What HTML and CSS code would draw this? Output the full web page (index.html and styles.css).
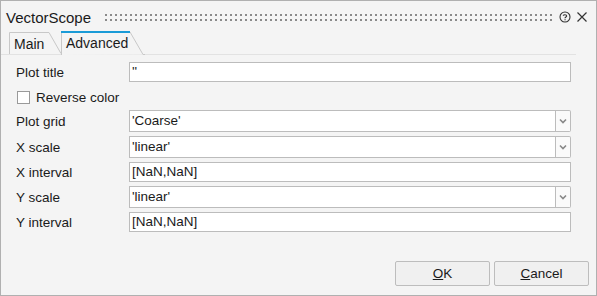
FILE: index.html
```html
<!DOCTYPE html>
<html>
<head>
<meta charset="utf-8">
<link rel="stylesheet" href="styles.css">
</head>
<body>
<div class="window">
  <div class="titlebar">
    <span class="title">VectorScope</span>
    <span class="grip"></span>
    <svg class="help" width="12" height="12" viewBox="0 0 12 12"><circle cx="6" cy="6" r="5" fill="none" stroke="#333" stroke-width="1.1"/><path d="M4.3 4.8 C4.3 3.4 7.7 3.4 7.7 4.9 C7.7 6 6 6 6 7.2" fill="none" stroke="#333" stroke-width="1.1"/><rect x="5.5" y="8.2" width="1.1" height="1.1" fill="#333"/></svg>
    <svg class="close" width="12" height="12" viewBox="0 0 12 12"><path d="M1.5 1.5 L10.5 10.5 M10.5 1.5 L1.5 10.5" stroke="#333" stroke-width="1.2"/></svg>
  </div>
  <div class="tabs">
    <div class="tab">
      <svg class="tabshape" width="56" height="22" viewBox="0 0 56 22" preserveAspectRatio="none"><path d="M0.5 22 V0.5 H40 L52 21.5 H56" fill="none" stroke="#c8c8c8"/></svg>
      <span>Main</span>
    </div>
    <div class="tab active">
      <svg class="tabshape" width="84" height="24" viewBox="0 0 84 24" preserveAspectRatio="none"><path d="M0.5 24 V1 H69 L82 23.5 H84" fill="#f4f4f4" stroke="#c8c8c8"/><rect x="0" y="0" width="69" height="2" fill="#1a9bd7"/></svg>
      <span>Advanced</span>
    </div>
  </div>
  <div class="form">
    <label class="lbl">Plot title</label>
    <div class="field text">''</div>

    <div class="check full"><span class="box"></span><span>Reverse color</span></div>

    <label class="lbl">Plot grid</label>
    <div class="select"><div class="field sel">'Coarse'</div><div class="drop"><svg width="8" height="6" viewBox="0 0 8 6"><path d="M1 1.5 L4 4.5 L7 1.5" fill="none" stroke="#888" stroke-width="1.6"/></svg></div></div>

    <label class="lbl">X scale</label>
    <div class="select"><div class="field sel">'linear'</div><div class="drop"><svg width="8" height="6" viewBox="0 0 8 6"><path d="M1 1.5 L4 4.5 L7 1.5" fill="none" stroke="#888" stroke-width="1.6"/></svg></div></div>

    <label class="lbl">X interval</label>
    <div class="field text">[NaN,NaN]</div>

    <label class="lbl">Y scale</label>
    <div class="select"><div class="field sel">'linear'</div><div class="drop"><svg width="8" height="6" viewBox="0 0 8 6"><path d="M1 1.5 L4 4.5 L7 1.5" fill="none" stroke="#888" stroke-width="1.6"/></svg></div></div>

    <label class="lbl">Y interval</label>
    <div class="field text">[NaN,NaN]</div>
  </div>
  <div class="buttons">
    <button class="btn"><u>O</u>K</button>
    <button class="btn"><u>C</u>ancel</button>
  </div>
</div>
</body>
</html>
```
FILE: styles.css
```css
* { box-sizing: border-box; }
html, body { margin: 0; padding: 0; background: #f4f4f4; }
body { font-family: "Liberation Sans", Arial, sans-serif; font-size: 13.5px; color: #1a1a1a; }
.window {
  width: 597px; height: 296px;
  border: 1px solid #b0b0b0;
  background: #f4f4f4;
  display: flex; flex-direction: column;
  position: relative;
}
.titlebar {
  height: 30px;
  display: flex; align-items: center;
  padding: 2px 0 0 5px;
}
.title { font-size: 15px; color: #1a1a1a; margin-right: 14px; }
.grip {
  flex: 1;
  height: 7px;
  margin-right: 6px;
  background-image: radial-gradient(circle at 1px 1px, #8a8a8a 1px, transparent 1.2px);
  background-size: 5px 5px;
  background-repeat: repeat;
}
.help { margin-right: 5px; }
.close { margin-right: 8px; }
.tabs {
  height: 24px;
  display: flex; align-items: flex-end;
  padding-left: 8px;
  border-bottom: 1px solid #e2e2e2;
  margin-right: 20px;
}
.tab {
  position: relative;
  width: 56px; height: 22px;
  font-size: 14px;
  padding: 4px 0 0 5px;
}
.tab span { position: relative; }
.tabshape { position: absolute; left: 0; top: 0; }
.tab.active {
  width: 84px; height: 24px;
  margin-left: -4px;
  margin-bottom: -1px;
  padding: 4px 0 0 5px;
}
.form {
  display: grid;
  grid-template-columns: 113px 442px;
  grid-template-rows: 20px 20px 22px 22px 20px 22px 20px;
  row-gap: 4px;
  padding: 7px 0 0 15px;
  align-items: center;
}
.lbl { font-size: 13.5px; }
.full { grid-column: 1 / 3; }
.check { display: flex; align-items: center; gap: 6px; height: 20px; padding: 2px 0 0 1px; }
.box { width: 13px; height: 13px; border: 1px solid #9a9a9a; background: #fff; }
.field {
  height: 20px;
  background: #fff;
  border: 1px solid #bcbcbc;
  padding: 1px 0 0 2px;
  font-size: 13.5px;
  white-space: nowrap;
}
.select { display: flex; height: 22px; }
.select .sel { flex: 1; height: 22px; padding-top: 2px; }
.drop {
  width: 15px; height: 22px;
  border: 1px solid #bcbcbc;
  border-left: none;
  border-radius: 0 2px 2px 0;
  background: #fafafa;
  display: flex; align-items: center; justify-content: center;
}
.buttons {
  margin-top: auto;
  display: flex; justify-content: flex-end; gap: 4px;
  padding: 0 7px 9px 0;
}
.btn {
  width: 95px; height: 25px;
  background: #f0f0f0;
  border: 1px solid #bdbdbd;
  border-radius: 2px;
  font-family: "Liberation Sans", Arial, sans-serif;
  font-size: 13.5px;
  color: #1a1a1a;
  padding: 0;
}
```
